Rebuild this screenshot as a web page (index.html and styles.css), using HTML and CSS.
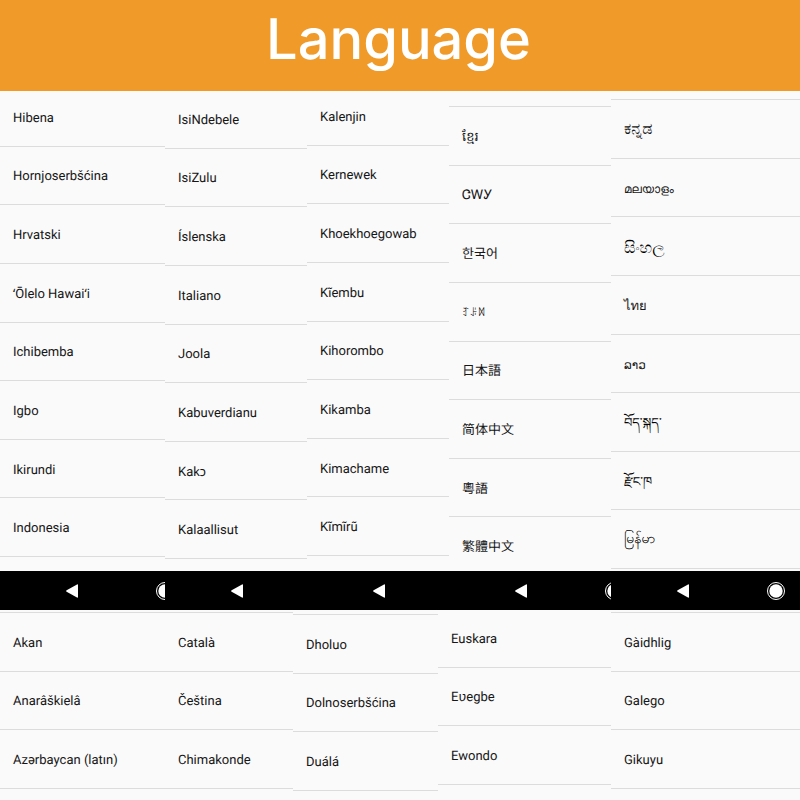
FILE: index.html
```html
<!DOCTYPE html>
<html lang="en">
<head>
<meta charset="utf-8">
<title>Language</title>
<link rel="stylesheet" href="styles.css">
</head>
<body>
<svg class="sprite" aria-hidden="true">
  <symbol id="back" viewBox="0 0 20 20"><path d="M4.600 9.300 15 3.400q1-.5 1 .6v12q0 1.100-1 .6L4.600 10.700q-1.200-.7 0-1.400z" fill="#fff"/></symbol>
  <symbol id="home" viewBox="0 0 20 20"><circle cx="10" cy="10" r="8.500" fill="none" stroke="#fff" stroke-width="1"/><circle cx="10" cy="10" r="6.700" fill="#fff"/></symbol>
</svg>
<header class="banner"><h1>Language</h1></header>
<main>
  <section class="screens screens-main">
    <div class="screen">
      <ul class="list list-eight lift-3">
        <li>Hibena</li><li>Hornjoserbšćina</li><li>Hrvatski</li><li>ʻŌlelo Hawaiʻi</li><li>Ichibemba</li><li>Igbo</li><li>Ikirundi</li><li>Indonesia</li>
      </ul>
      <nav class="keys"><button aria-label="Back"><svg><use href="#back"/></svg></button><button aria-label="Home"><svg><use href="#home"/></svg></button></nav>
    </div>
    <div class="screen">
      <ul class="list list-eight lift-1">
        <li>IsiNdebele</li><li>IsiZulu</li><li>Íslenska</li><li>Italiano</li><li>Joola</li><li>Kabuverdianu</li><li>Kakɔ</li><li>Kalaallisut</li>
      </ul>
      <nav class="keys"><button aria-label="Back"><svg><use href="#back"/></svg></button><button aria-label="Home"><svg><use href="#home"/></svg></button></nav>
    </div>
    <div class="screen">
      <ul class="list list-eight lift-4">
        <li>Kalenjin</li><li>Kernewek</li><li>Khoekhoegowab</li><li>Kĩembu</li><li>Kihorombo</li><li>Kikamba</li><li>Kimachame</li><li>Kĩmĩrũ</li>
      </ul>
      <nav class="keys"><button aria-label="Back"><svg><use href="#back"/></svg></button><button aria-label="Home"><svg><use href="#home"/></svg></button></nav>
    </div>
    <div class="screen">
      <ul class="list list-eight ruled drop-15">
        <li lang="km">ខ្មែរ</li><li lang="chr">ᏣᎳᎩ</li><li class="tall" lang="ko">한국어</li><li lang="ii">ꆈꌠꉙ</li><li class="tall" lang="ja">日本語</li><li class="tall" lang="zh-Hans">简体中文</li><li class="tall" lang="yue">粵語</li><li class="tall" lang="zh-Hant">繁體中文</li>
      </ul>
      <nav class="keys"><button aria-label="Back"><svg><use href="#back"/></svg></button><button aria-label="Home"><svg><use href="#home"/></svg></button></nav>
    </div>
    <div class="screen">
      <ul class="list list-eight ruled drop-8">
        <li class="tall" lang="kn">ಕನ್ನಡ</li><li lang="ml">മലയാളം</li><li lang="si">සිංහල</li><li lang="th">ไทย</li><li lang="lo">ລາວ</li><li lang="bo">བོད་སྐད་</li><li lang="dz">རྫོང་ཁ</li><li class="tall" lang="my">မြန်မာ</li>
      </ul>
      <nav class="keys"><button aria-label="Back"><svg><use href="#back"/></svg></button><button aria-label="Home"><svg><use href="#home"/></svg></button></nav>
    </div>
  </section>
  <section class="screens screens-more">
    <div class="screen"><ul class="list list-three ruled drop-2"><li>Akan</li><li>Anarâškielâ</li><li>Azərbaycan (latın)</li></ul></div>
    <div class="screen"><ul class="list list-three ruled drop-2"><li>Català</li><li>Čeština</li><li>Chimakonde</li></ul></div>
    <div class="screen"><ul class="list list-three ruled drop-4"><li>Dholuo</li><li>Dolnoserbšćina</li><li>Duálá</li></ul></div>
    <div class="screen"><ul class="list list-three lift-1"><li>Euskara</li><li>Eʋegbe</li><li>Ewondo</li></ul></div>
    <div class="screen"><ul class="list list-three ruled drop-2"><li>Gàidhlig</li><li>Galego</li><li>Gikuyu</li></ul></div>
  </section>
</main>
</body>
</html>
```
FILE: styles.css
```css
* { box-sizing: border-box; }

body {
  margin: 0;
  min-height: 100vh;
  background: #fafafa;
  color: #161616;
  font: 13px/20px Roboto, "Noto Sans", "Noto Sans CJK SC", sans-serif;
  text-rendering: geometricPrecision;
}

.sprite { display: none; }

.banner {
  height: 91px;
  padding: 3px 3px 0 0;
  background: #f09b29;
  color: #fff;
  text-align: center;
}

h1 {
  margin: 0;
  font: 500 56px/72px Inter, sans-serif;
}

.screens { display: grid; }
.screens-main { grid-template-columns: 165fr 142fr 142fr 162fr 189fr; height: 519px; }
.screens-more { grid-template-columns: 165fr 128fr 145fr 173fr 189fr; height: 190px; }

.screen {
  display: grid;
  grid-template-rows: minmax(0, 1fr);
  align-items: start;
  min-width: 0;
  overflow: hidden;
}

.screens-main .screen { grid-template-rows: minmax(0, 1fr) 39px; }

.list {
  display: grid;
  margin: 0;
  padding: 0;
  list-style: none;
}

/* Row pitch is shared out evenly over the height of the list. */
.list-eight { grid-template-rows: repeat(8, 1fr); height: 469px; }
.list-three { grid-template-rows: repeat(3, 1fr); height: 176px; }
.list.ruled { border-top: 1px solid #dcdcdc; }
.list.ruled.list-eight { height: 470px; }
.list.ruled.list-three { height: 177px; }

.list li {
  display: flex;
  align-items: center;
  padding: 4px 0 0 13px;
  border-bottom: 1px solid #dcdcdc;
  white-space: nowrap;
}

.list .tall { padding-top: 0; }

.lift-1 { margin-top: -1px; }
.lift-3 { margin-top: -3px; }
.lift-4 { margin-top: -4px; }
.drop-2 { margin-top: 2px; }
.drop-4 { margin-top: 4px; }
.drop-8 { margin-top: 8px; }
.drop-15 { margin-top: 15px; }

.keys {
  position: relative;
  display: flex;
  gap: 73px;
  height: 39px;
  padding-left: 62px;
  align-items: center;
  overflow: hidden;
  background: #000;
}

.keys button {
  flex: none;
  width: 20px;
  height: 20px;
  padding: 0;
  border: 0;
  background: none;
}

.keys svg { display: block; width: 20px; height: 20px; }

:lang(ko) { font-family: "Noto Sans CJK KR", sans-serif; }
:lang(ja) { font-family: "Noto Sans CJK JP", sans-serif; }
:lang(zh-Hans) { font-family: "Noto Sans CJK SC", sans-serif; }
:lang(zh-Hant), :lang(yue) { font-family: "Noto Sans CJK TC", sans-serif; }

/* Scripts whose fallback faces run large, small or light beside Roboto. */
:lang(ii) { font-size: 10px; }
:lang(ml), :lang(lo) { font-size: 12px; }
:lang(my) { font-size: 14px; }
:lang(kn), :lang(si) { font-size: 16px; }
:lang(ii), :lang(my), :lang(si), :lang(bo), :lang(dz) { color: #000; font-weight: 500; }
```
